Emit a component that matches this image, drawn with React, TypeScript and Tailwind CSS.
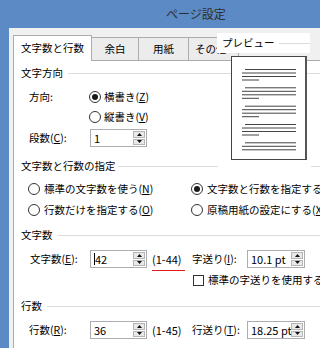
import React from "react";

// ページ設定ダイアログ（文字数と行数タブ）
function Radio({ checked = false }: { checked?: boolean }) {
  return (
    <div className="w-[12px] h-[12px] shrink-0 rounded-full border border-[#333] bg-white flex items-center justify-center">
      {checked && <div className="w-[6px] h-[6px] rounded-full bg-[#1a1a1a]" />}
    </div>
  );
}

function Arrow({ down = false }: { down?: boolean }) {
  return (
    <svg width="5" height="3" viewBox="0 0 5 3">
      <path d={down ? "M0 0H5L2.5 3z" : "M2.5 0L5 3H0z"} fill="#111" />
    </svg>
  );
}

function Spin() {
  return (
    <div className="flex flex-col gap-px w-[13px] shrink-0 py-px pr-px">
      <div className="flex-1 bg-[#e9e9e9] border border-[#b5b5b5] flex items-center justify-center">
        <Arrow />
      </div>
      <div className="flex-1 bg-[#e9e9e9] border border-[#b5b5b5] flex items-center justify-center">
        <Arrow down />
      </div>
    </div>
  );
}

function NumBox({ value, caret = false, className }: { value: string; caret?: boolean; className: string }) {
  return (
    <div className={`flex shrink-0 h-[18px] border border-[#abadb3] bg-white ${className}`}>
      <div className="flex-1 flex items-center pl-[3px] overflow-hidden whitespace-nowrap text-[11px]">
        {caret && <span className="w-px h-[12px] bg-black" />}
        <span>{value}</span>
      </div>
      <Spin />
    </div>
  );
}

function Heading({ label, children }: { label: string; children?: React.ReactNode }) {
  return (
    <div className="flex items-center h-[16px] pl-[7px]">
      <span className="whitespace-nowrap shrink-0">{label}</span>
      {children ?? <div className="ml-[5px] flex-1 h-px bg-[#dcdcdc]" />}
    </div>
  );
}

function PageLines() {
  const groups = [13, 31.3, 49.7, 68, 86.3];
  return (
    <svg width="74" height="102" viewBox="0 0 74 102">
      {groups.map((g, i) => (
        <g key={i} stroke="#444" strokeWidth="1">
          <line x1="13" x2="64" y1={g - 0.5} y2={g - 0.5} />
          <line x1="10" x2="64" y1={g + 3} y2={g + 3} />
          <line x1="10" x2="64" y1={g + 6.5} y2={g + 6.5} />
          {i < 4 && <line x1="10" x2="27" y1={g + 10} y2={g + 10} />}
        </g>
      ))}
    </svg>
  );
}

export default function App() {
  return (
    <div className="relative w-[320px] h-[348px] overflow-hidden bg-[#5b8ac5] font-['Noto_Sans_CJK_JP','Noto_Sans',sans-serif] text-[10.5px] leading-none text-black">
      {/* タイトルバー */}
      <div className="h-[28px] flex items-center pl-[166px] text-[12px] text-[#2e2e2e]">ページ設定</div>

      <div className="ml-[9px] h-[320px] bg-[#f0f0f0] pl-[4px] pt-[7px] flex flex-col">
        {/* タブ */}
        <div className="flex items-end h-[26px] -mb-px relative z-10">
          <div className="shrink-0 h-[26px] w-[79px] bg-white border border-b-0 border-[#acacac] flex items-center pl-[7px] whitespace-nowrap">
            文字数と行数
          </div>
          <div className="shrink-0 mb-px h-[23px] w-[47px] bg-[#ececec] border-t border-r border-[#acacac] flex items-center justify-center">
            余白
          </div>
          <div className="shrink-0 mb-px h-[23px] w-[50px] bg-[#ececec] border-t border-r border-[#acacac] flex items-center justify-center">
            用紙
          </div>
          <div className="shrink-0 mb-px h-[23px] w-[50px] bg-[#ececec] border-t border-r border-[#acacac] flex items-center pl-[6px] whitespace-nowrap">
            その他
          </div>
        </div>

        {/* タブの中身 */}
        <div className="flex-1 bg-white border-t border-l border-[#acacac] flex flex-col">
          <div className="mt-[4px]">
            <Heading label="文字方向" />
          </div>
          <div className="mt-[8px] h-[16px] flex items-center pl-[15px]">
            <span className="w-[60px] shrink-0">方向:</span>
            <Radio checked />
            <span className="ml-[3px]">
              横書き(<span className="underline">Z</span>)
            </span>
          </div>
          <div className="mt-[4px] h-[16px] flex items-center pl-[75px]">
            <Radio />
            <span className="ml-[3px]">
              縦書き(<span className="underline">V</span>)
            </span>
          </div>
          <div className="mt-[4px] h-[18px] flex items-center pl-[15px]">
            <span className="w-[61px] shrink-0">
              段数(<span className="underline">C</span>):
            </span>
            <NumBox value="1" className="w-[57px]" />
          </div>

          <div className="mt-[11px]">
            <Heading label="文字数と行数の指定">
              <div className="ml-[2px] w-[100px] shrink-0 h-px bg-[#dcdcdc]" />
              <div className="ml-[93px] flex-1 h-px bg-[#dcdcdc]" />
            </Heading>
          </div>
          <div className="mt-[7px] h-[16px] flex items-center pl-[14px] whitespace-nowrap">
            <div className="w-[163px] shrink-0 flex items-center">
              <Radio />
              <span className="ml-[4px]">
                標準の文字数を使う(<span className="underline">N</span>)
              </span>
            </div>
            <Radio checked />
            <span className="ml-[4px]">文字数と行数を指定する(</span>
          </div>
          <div className="mt-[5px] h-[16px] flex items-center pl-[14px] whitespace-nowrap">
            <div className="w-[163px] shrink-0 flex items-center">
              <Radio />
              <span className="ml-[4px]">
                行数だけを指定する(<span className="underline">O</span>)
              </span>
            </div>
            <Radio />
            <span className="ml-[4px]">
              原稿用紙の設定にする(<span className="underline">X</span>
            </span>
          </div>

          <div className="mt-[9px]">
            <Heading label="文字数" />
          </div>
          <div className="mt-[7px] h-[18px] flex items-center pl-[16px] whitespace-nowrap">
            <span className="w-[60px] shrink-0">
              文字数(<span className="underline">E</span>):
            </span>
            <NumBox value="42" caret className="w-[57px]" />
            <span className="ml-[5px] w-[40px] shrink-0 relative text-[11px]">
              (1-44)
              <span className="absolute left-0 top-[16px] w-[33px] h-px bg-[#e21a1a]" />
            </span>
            <span className="w-[55px] shrink-0">
              字送り(<span className="underline">I</span>):
            </span>
            <NumBox value="10.1 pt" className="w-[58px]" />
          </div>
          <div className="mt-[4px] h-[16px] flex items-center pl-[179px] whitespace-nowrap">
            <div className="w-[11px] h-[11px] shrink-0 border border-[#333] bg-white" />
            <span className="ml-[4px]">標準の字送りを使用する(</span>
          </div>

          <div className="mt-[10px]">
            <Heading label="行数" />
          </div>
          <div className="mt-[7px] h-[18px] flex items-center pl-[15px] whitespace-nowrap">
            <span className="w-[61px] shrink-0">
              行数(<span className="underline">R</span>):
            </span>
            <NumBox value="36" className="w-[57px]" />
            <span className="ml-[5px] w-[40px] shrink-0 text-[11px]">(1-45)</span>
            <span className="w-[55px] shrink-0">
              行送り(<span className="underline">T</span>):
            </span>
            <NumBox value="18.25 pt" className="w-[58px]" />
          </div>
        </div>
      </div>

      {/* プレビュー（重ねて表示） */}
      <div className="absolute z-20 left-[217px] top-[33px] w-[93px] h-[20px] bg-white flex items-center pl-[5px]">
        <span className="whitespace-nowrap shrink-0">プレビュー</span>
        <div className="ml-[4px] flex-1 h-px bg-[#dcdcdc]" />
      </div>
      <div className="absolute z-20 left-[231px] top-[56px] w-[76px] h-[104px] bg-white border border-[#444] border-r-2 border-r-[#555]">
        <PageLines />
      </div>
    </div>
  );
}
